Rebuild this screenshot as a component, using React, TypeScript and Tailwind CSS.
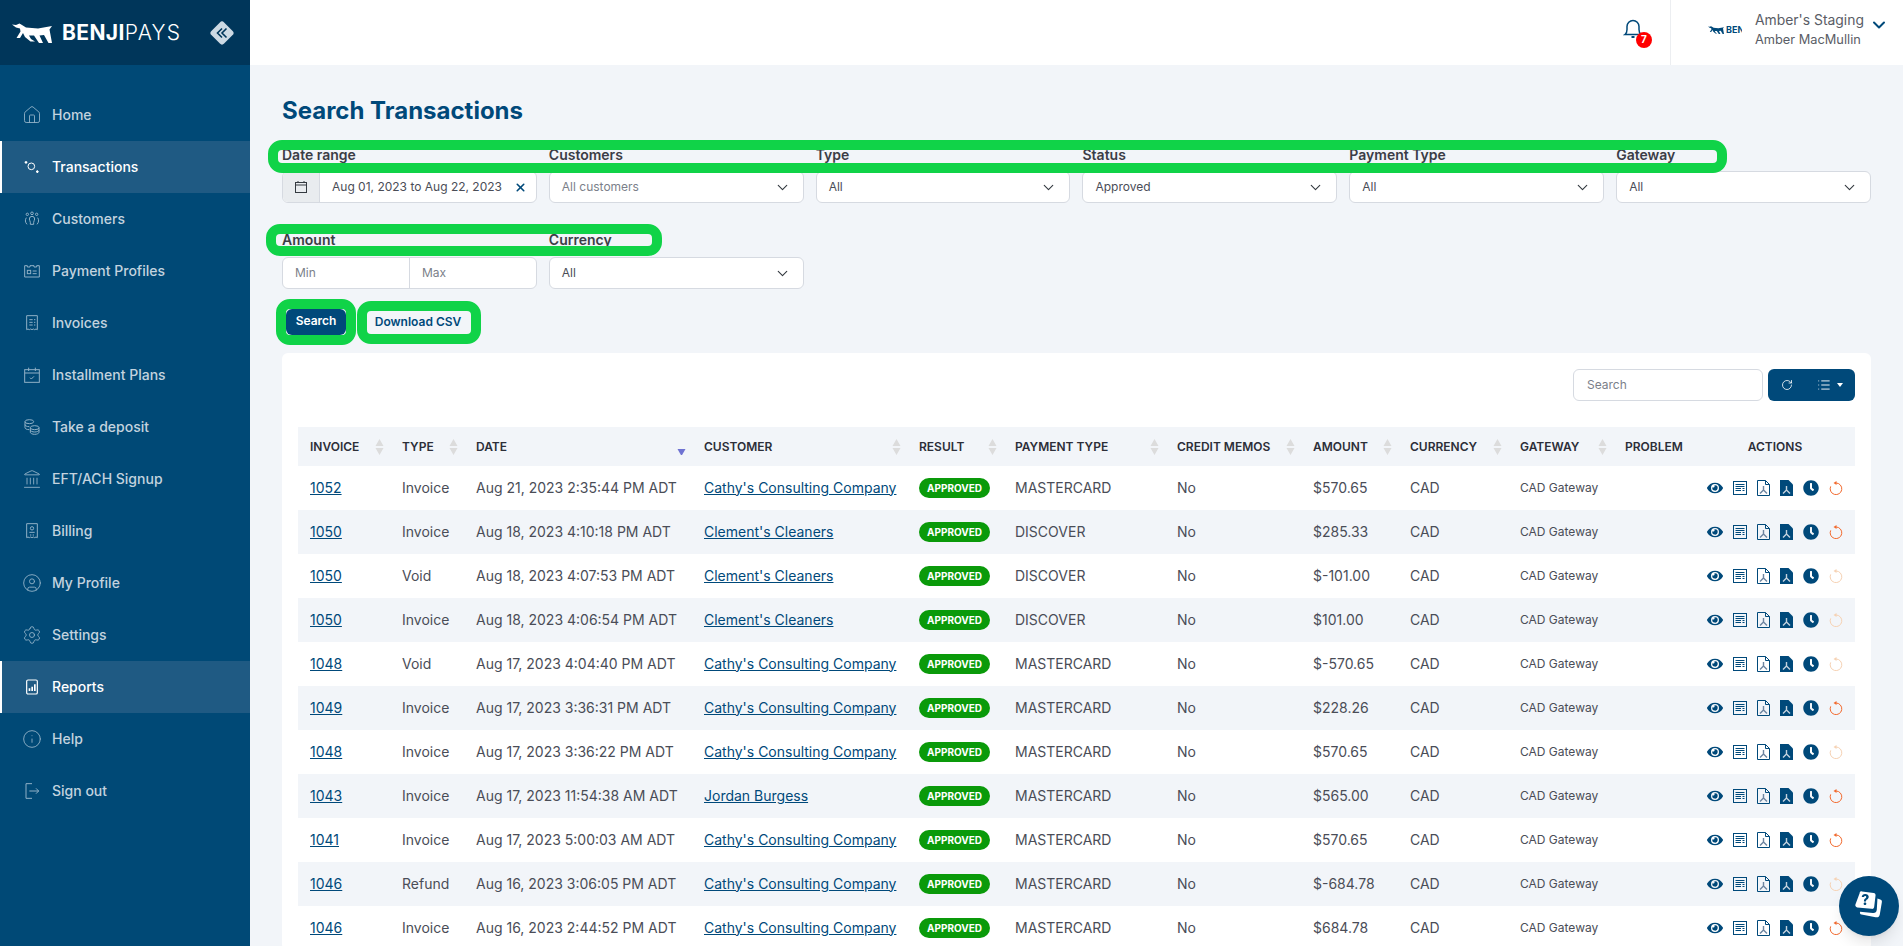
import { ChevronDown, RotateCw, List, House, Landmark, CircleUser, Settings, Info, X } from "lucide-react";
import { FaEye, FaClock } from "react-icons/fa";
import type { ReactNode } from "react";

const iconProps = {
  width: 16,
  height: 16,
  viewBox: "0 0 24 24",
  fill: "none",
  stroke: "currentColor",
  strokeWidth: 1.5,
};

const TransactionsIcon = () => (
  <svg {...iconProps}>
    <circle cx="11" cy="11" r="5" />
    <path d="M3 3v4M1 5h4M20 17v4M18 19h4" strokeWidth={2} />
  </svg>
);

const CustomersIcon = () => (
  <svg {...iconProps}>
    <circle cx="12" cy="3.500" r="2" />
    <circle cx="5" cy="5" r="1.800" />
    <circle cx="19" cy="5" r="1.800" />
    <path d="M8 12a4 4 0 0 1 8 0c0 2-1.500 3-1.500 5v3h-5v-3c0-2-1.500-3-1.500-5z" />
    <path d="M3.500 10c-2 3-2 7 1 10M20.500 10c2 3 2 7-1 10" />
  </svg>
);

const ProfilesIcon = () => (
  <svg {...iconProps}>
    <path d="M1 4h4v2h4V4h6v2h4V4h4v17H1z" />
    <rect x="5" y="11" width="5" height="5" />
    <path d="M13 12h6M13 16h6" />
  </svg>
);

const InvoicesIcon = () => (
  <svg {...iconProps}>
    <path d="M4 1h16v21l-2-1-2 1-2-1-2 1-2-1-2 1-2-1-2 1z" />
    <path d="M8 7h5M15 7h2M8 11h5M15 11h2M8 15h5M15 15h2" />
  </svg>
);

const PlansIcon = () => (
  <svg {...iconProps}>
    <rect x="1" y="4" width="22" height="19" />
    <path d="M1 9h22M7 1v5M17 1v5M9 16l2 2 4-4" />
  </svg>
);

const DepositIcon = () => (
  <svg {...iconProps}>
    <ellipse cx="8" cy="4" rx="6.500" ry="3" />
    <path d="M1.500 4v9c0 1.500 2.500 3 6.500 3M1.500 8.500c0 1.500 2.500 3 6.500 3" />
    <ellipse cx="16" cy="13" rx="6.500" ry="3" />
    <path d="M9.500 13v7c0 1.500 3 3 6.500 3s6.500-1.500 6.500-3v-7M9.500 16.500c0 1.500 3 3 6.500 3s6.500-1.500 6.500-3" />
  </svg>
);

const BillingIcon = () => (
  <svg {...iconProps}>
    <path d="M4 1h16v21l-2-1-2 1-2-1-2 1-2-1-2 1-2-1-2 1z" />
    <circle cx="12" cy="8" r="2.500" />
    <path d="M8 14h8M9 18h2M13 18h2" />
  </svg>
);

const ReportsIcon = () => (
  <svg {...iconProps} strokeWidth={1.8}>
    <rect x="4" y="1.500" width="16" height="21" rx="2" />
    <path d="M7 14h2.500v4H7zM11 11.500h2.500V18H11zM15 8h2.500v10H15z" fill="currentColor" stroke="none" />
  </svg>
);

const SignOutIcon = () => (
  <svg {...iconProps}>
    <path d="M12 1H3v22h9M8 12h14M18 8l4 4-4 4" />
  </svg>
);

const thinIcon = { size: 20, strokeWidth: 1.1, className: "shrink-0" };

const navItems: { label: string; icon: ReactNode; active?: boolean }[] = [
  { label: "Home", icon: <House {...thinIcon} /> },
  { label: "Transactions", icon: <TransactionsIcon />, active: true },
  { label: "Customers", icon: <CustomersIcon /> },
  { label: "Payment Profiles", icon: <ProfilesIcon /> },
  { label: "Invoices", icon: <InvoicesIcon /> },
  { label: "Installment Plans", icon: <PlansIcon /> },
  { label: "Take a deposit", icon: <DepositIcon /> },
  { label: "EFT/ACH Signup", icon: <Landmark {...thinIcon} /> },
  { label: "Billing", icon: <BillingIcon /> },
  { label: "My Profile", icon: <CircleUser {...thinIcon} /> },
  { label: "Settings", icon: <Settings {...thinIcon} /> },
  { label: "Reports", icon: <ReportsIcon />, active: true },
  { label: "Help", icon: <Info {...thinIcon} /> },
  { label: "Sign out", icon: <SignOutIcon /> },
];

const cathy = "Cathy's Consulting Company";
const clement = "Clement's Cleaners";

// invoice, type, date, customer, payment type, amount, can refund
const rows: [string, string, string, string, string, string, boolean][] = [
  ["1052", "Invoice", "Aug 21, 2023 2:35:44 PM ADT", cathy, "MASTERCARD", "$570.65", true],
  ["1050", "Invoice", "Aug 18, 2023 4:10:18 PM ADT", clement, "DISCOVER", "$285.33", true],
  ["1050", "Void", "Aug 18, 2023 4:07:53 PM ADT", clement, "DISCOVER", "$-101.00", false],
  ["1050", "Invoice", "Aug 18, 2023 4:06:54 PM ADT", clement, "DISCOVER", "$101.00", false],
  ["1048", "Void", "Aug 17, 2023 4:04:40 PM ADT", cathy, "MASTERCARD", "$-570.65", false],
  ["1049", "Invoice", "Aug 17, 2023 3:36:31 PM ADT", cathy, "MASTERCARD", "$228.26", true],
  ["1048", "Invoice", "Aug 17, 2023 3:36:22 PM ADT", cathy, "MASTERCARD", "$570.65", false],
  ["1043", "Invoice", "Aug 17, 2023 11:54:38 AM ADT", "Jordan Burgess", "MASTERCARD", "$565.00", true],
  ["1041", "Invoice", "Aug 17, 2023 5:00:03 AM ADT", cathy, "MASTERCARD", "$570.65", true],
  ["1046", "Refund", "Aug 16, 2023 3:06:05 PM ADT", cathy, "MASTERCARD", "$-684.78", false],
  ["1046", "Invoice", "Aug 16, 2023 2:44:52 PM ADT", cathy, "MASTERCARD", "$684.78", true],
];

const columns: { label: string; width: string; sort?: "both" | "down" }[] = [
  { label: "Invoice", width: "w-[92px]", sort: "both" },
  { label: "Type", width: "w-[74px]", sort: "both" },
  { label: "Date", width: "w-[228px]", sort: "down" },
  { label: "Customer", width: "w-[215px]", sort: "both" },
  { label: "Result", width: "w-[96px]", sort: "both" },
  { label: "Payment Type", width: "w-[162px]", sort: "both" },
  { label: "Credit Memos", width: "w-[136px]", sort: "both" },
  { label: "Amount", width: "w-[97px]", sort: "both" },
  { label: "Currency", width: "w-[110px]", sort: "both" },
  { label: "Gateway", width: "w-[105px]", sort: "both" },
  { label: "Problem", width: "w-[82px]" },
];

const DogLogo = ({ className }: { className: string }) => (
  <svg viewBox="0 0 40 20" className={className} fill="currentColor">
    <path d="M0 1.500 4 2 7.500 0.500 10 2 14 4.500 26 5.500 40 3 37.500 6.500 40 20H36.500L32 12 27.500 12.500 31 20H27L22 12.500 17 12.500 19 16 23 18.500H18.500L13 14 11 10 8 15H4.500L8.500 8.500 8 5.500 4 4.500Z" />
  </svg>
);

const Select = ({ value, muted }: { value: string; muted?: boolean }) => (
  <div className="flex h-8 items-center justify-between rounded-md border border-[#d6dae1] bg-white pr-[12px] pl-3 text-xs">
    <span className={muted ? "text-[#7b7f8a]" : "text-[#4a4d57]"}>{value}</span>
    <ChevronDown size={17} strokeWidth={1.6} className="text-[#343a40]" />
  </div>
);

const Label = ({ children, low }: { children: string; low?: boolean }) => (
  <div className={low ? "mb-[9px] h-4 text-sm leading-4 font-semibold text-[#3b3d46]" : "mb-2 h-4 text-sm leading-4 font-semibold text-[#3b3d46]"}>
    {children}
  </div>
);

const DocIcon = () => (
  <svg viewBox="0 0 14 14" className="h-[14px] w-[14px]" fill="none" stroke="currentColor">
    <rect x="0.500" y="0.500" width="13" height="13" strokeWidth="1" />
    <path d="M2.500 3.500h9M2.500 5.500h9M2.500 7.500h5.500M9.500 7.500h2M2.500 9.500h5.500M9.500 9.500h2" strokeWidth="1" />
  </svg>
);

const PdfOutlineIcon = () => (
  <svg viewBox="0 0 13 16" className="h-4 w-[13px]" fill="none">
    <path d="M0.500 0.500H8.500L12.500 4.500V15.500H0.500Z M8.500 0.500V4.500H12.500" stroke="#00497a" />
    <path d="M6.500 6V10M6.500 10 3 13.500M6.500 10 10 13.500" stroke="#6d84a0" strokeWidth="1.400" />
  </svg>
);

const PdfSolidIcon = () => (
  <svg viewBox="0 0 13 16" className="h-4 w-[13px]">
    <path d="M0 0H8.500L13 4.500V16H0Z" fill="#00497a" />
    <path d="M6.500 6V10M6.500 10 3 13.500M6.500 10 10 13.500" stroke="#c4d2de" strokeWidth="1.400" fill="none" />
  </svg>
);

const RefundIcon = ({ on }: { on: boolean }) => (
  <svg viewBox="0 0 14 14" className={on ? "h-[14px] w-[14px] text-[#f26a2e]" : "h-[14px] w-[14px] text-[#f6d2b4]"} fill="none" stroke="currentColor">
    <path d="M7 2a5.800 5.800 0 1 1-5.300 3.400" strokeWidth="1" />
    <path d="M7.500 0v4L4.500 2z" fill="currentColor" stroke="none" />
  </svg>
);

const SortArrows = ({ kind }: { kind: "both" | "down" }) =>
  kind === "down" ? (
    <svg width="9" height="16" viewBox="0 0 9 16" className="text-[#6f73d2]">
      <path d="M0.500 10h8l-4 7z" fill="currentColor" />
    </svg>
  ) : (
    <svg width="9" height="16" viewBox="0 0 9 16" className="text-[#dcdcdc]">
      <path d="M4.500 0l4 7h-8zM0.500 9h8l-4 7z" fill="currentColor" />
    </svg>
  );

const App = () => {
  return (
    <div className="flex h-screen overflow-hidden bg-[#f2f5f9] font-['Inter',sans-serif]">
      <aside className="w-[250px] shrink-0 bg-[#004976]">
        <div className="flex h-[65px] items-center bg-[#00365a] pr-4 pl-3 text-white">
          <DogLogo className="h-5 w-10" />
          <span className="ml-[10px] text-[21px] leading-none font-bold tracking-[0.4px]">BENJI</span>
          <span className="text-[21px] leading-none font-light tracking-[1.2px]">PAYS</span>
          <span className="mr-[3px] ml-auto flex h-[18px] w-[18px] rotate-45 items-center justify-center rounded-[3px] bg-[#ccd9e3]">
            <svg viewBox="0 0 14 14" className="h-[14px] w-[14px] -rotate-45 text-[#00365a]" fill="none" stroke="currentColor" strokeWidth="1.600">
              <path d="M7 2.500 2.500 7 7 11.500M11.500 2.500 7 7l4.500 4.500" />
            </svg>
          </span>
        </div>
        <nav className="pt-6">
          {navItems.map((item) => (
            <div
              key={item.label}
              className={
                item.active
                  ? "flex h-[52px] items-center gap-3 border-l-2 border-white bg-[#1f5a83] pl-[22px] text-sm font-medium text-white"
                  : "flex h-[52px] items-center gap-3 pl-6 text-sm font-medium text-[#c3d3df]"
              }
            >
              <span className={item.active ? "flex h-4 w-4 items-center justify-center text-white" : "flex h-4 w-4 items-center justify-center text-[#8fb0c6]"}>
                {item.icon}
              </span>
              {item.label}
            </div>
          ))}
        </nav>
      </aside>

      <div className="flex min-w-0 flex-1 flex-col">
        <header className="flex h-[65px] shrink-0 items-center justify-end bg-white">
          <div className="relative mr-[27px] -translate-y-[4px] text-[#00497a]">
            <svg viewBox="0 0 20 20" className="h-5 w-5" fill="none" stroke="currentColor" strokeWidth="1.500">
              <path d="M2 15.500c1.500-1 2-2.500 2-5V7.500a6 6 0 0 1 12 0v3c0 2.500.5 4 2 5z" />
              <path d="M8.500 18h3" strokeWidth="2" />
            </svg>
            <span className="absolute top-[13px] left-[13px] flex h-4 w-4 items-center justify-center rounded-full bg-[#f00] text-[10px] font-bold text-white">
              7
            </span>
          </div>
          <div className="flex h-full w-[233px] items-center border-l border-[#eceef1] pl-[37px]">
            <div className="flex w-[34px] -translate-y-[3px] items-center overflow-hidden text-[#00497a]">
              <DogLogo className="h-[8px] w-[16px] shrink-0" />
              <span className="ml-[2px] text-[9px] font-bold">BENJI</span>
            </div>
            <div className="ml-[13px] -translate-y-[3px] text-[13.9px] leading-[19px] text-[#5a5d66]">
              <div>Amber's Staging</div>
              <div className="text-[12.8px]">Amber MacMullin</div>
            </div>
            <ChevronDown size={20} strokeWidth={2.4} className="ml-[5px] -translate-y-[8px] text-[#00497a]" />
          </div>
        </header>

        <main className="relative flex-1 px-8">
          <h1 className="mt-[30px] h-8 text-2xl leading-8 font-bold text-[#00497a]">Search Transactions</h1>

          <div className="mt-5 grid grid-cols-6 gap-x-3 gap-y-[29px]">
            <div>
              <Label>Date range</Label>
              <div className="flex h-8 overflow-hidden rounded-md border border-[#d6dae1] bg-white">
                <span className="flex w-[37px] items-center justify-center border-r border-[#d6dae1] bg-[#e9ecef] text-[#343a40]">
                  <svg viewBox="0 0 14 14" className="h-[14px] w-[14px]" fill="none" stroke="currentColor">
                    <rect x="1.500" y="2.500" width="11" height="10" />
                    <path d="M1.500 5h11M4 1v2M10 1v2" />
                  </svg>
                </span>
                <span className="flex flex-1 items-center justify-between pr-[9px] pl-3 text-xs text-[#4a4d57]">
                  Aug 01, 2023 to Aug 22, 2023
                  <X size={13} strokeWidth={3} className="text-[#00497a]" />
                </span>
              </div>
            </div>
            <div>
              <Label>Customers</Label>
              <Select value="All customers" muted />
            </div>
            <div>
              <Label>Type</Label>
              <Select value="All" />
            </div>
            <div>
              <Label>Status</Label>
              <Select value="Approved" />
            </div>
            <div>
              <Label>Payment Type</Label>
              <Select value="All" />
            </div>
            <div>
              <Label>Gateway</Label>
              <Select value="All" />
            </div>
            <div>
              <Label low>Amount</Label>
              <div className="flex h-8 rounded-md border border-[#d6dae1] bg-white text-xs text-[#7b7f8a]">
                <span className="flex flex-1 items-center border-r border-[#d6dae1] pl-3">Min</span>
                <span className="flex flex-1 items-center pl-3">Max</span>
              </div>
            </div>
            <div>
              <Label low>Currency</Label>
              <Select value="All" />
            </div>
          </div>

          <div className="mt-5 ml-1 flex items-center gap-[21px]">
            <button className="relative h-[26px] w-[60px] rounded-md bg-[#00497a] pb-[2px] text-xs font-semibold text-white">
              Search
              <span className="absolute -inset-[10px] rounded-[14px] border-[10px] border-[#10d348]" />
            </button>
            <button className="relative h-[23px] w-[104px] rounded-md bg-[#f2f5f9] pr-[2px] pb-[1px] text-xs font-semibold text-[#00497a]">
              Download CSV
              <span className="absolute -inset-[10px] rounded-[14px] border-[10px] border-[#10d348]" />
            </button>
          </div>

          <section className="mt-[18px] rounded-md bg-white px-4 pt-4">
            <div className="flex justify-end">
              <div className="flex h-8 w-[190px] items-center rounded-md border border-[#d6dae1] pl-[13px] text-xs text-[#7b7f8a]">Search</div>
              <div className="ml-[5px] flex h-8 w-[87px] items-center rounded-md bg-[#00497a] text-white">
                <RotateCw size={12} strokeWidth={1.6} className="ml-[13px]" />
                <List size={14} strokeWidth={1.6} className="ml-6" />
                <svg width="6" height="4" viewBox="0 0 6 4" className="ml-[6px]">
                  <path d="M0 0h6L3 4z" fill="currentColor" />
                </svg>
              </div>
            </div>

            <table className="mt-[26px] w-full table-fixed border-collapse">
              <thead>
                <tr className="h-[39px] bg-[#f2f5f9] text-left text-xs font-semibold text-[#2c2e38] uppercase">
                  {columns.map((col) => (
                    <th key={col.label} className={`${col.width} pr-[6px] pl-3 font-semibold`}>
                      <div className="flex items-center justify-between whitespace-nowrap">
                        {col.label}
                        {col.sort && <SortArrows kind={col.sort} />}
                      </div>
                    </th>
                  ))}
                  <th className="text-center font-semibold">Actions</th>
                </tr>
              </thead>
              <tbody className="text-[14px] text-[#4a4d57]">
                {rows.map((row, i) => (
                  <tr key={row[2]} className={i % 2 === 1 ? "h-11 bg-[#f2f5f9]" : "h-11"}>
                    <td className="pb-[2px] pl-3">
                      <span className="text-[#00497a] underline">{row[0]}</span>
                    </td>
                    <td className="pb-[2px] pl-3">{row[1]}</td>
                    <td className="pb-[2px] pl-3 whitespace-nowrap">{row[2]}</td>
                    <td className="pb-[2px] pl-3 whitespace-nowrap">
                      <span className="text-[#00497a] underline">{row[3]}</span>
                    </td>
                    <td className="pl-3">
                      <span className="flex h-5 w-[71px] items-center justify-center rounded-full bg-[#0a9a0a] text-[10px] font-bold text-white">
                        APPROVED
                      </span>
                    </td>
                    <td className="pb-[2px] pl-3">{row[4]}</td>
                    <td className="pb-[2px] pl-3">No</td>
                    <td className="pb-[2px] pl-3">{row[5]}</td>
                    <td className="pb-[2px] pl-3">CAD</td>
                    <td className="pl-3 text-xs whitespace-nowrap">CAD Gateway</td>
                    <td />
                    <td>
                      <div className="flex items-center justify-center gap-[10px] text-[#00497a]">
                        <FaEye size={16} />
                        <DocIcon />
                        <PdfOutlineIcon />
                        <PdfSolidIcon />
                        <FaClock size={16} />
                        <RefundIcon on={row[6]} />
                      </div>
                    </td>
                  </tr>
                ))}
              </tbody>
            </table>
          </section>

          <div className="pointer-events-none absolute top-[75px] left-[18px] h-[33px] w-[1459px] rounded-[14px] border-[10px] border-[#10d348]" />
          <div className="pointer-events-none absolute top-[159px] left-[16px] h-[32px] w-[396px] rounded-[14px] border-[10px] border-[#10d348]" />
        </main>
      </div>

      <button className="fixed right-1 bottom-[10px] flex h-[60px] w-[60px] items-center justify-center rounded-full bg-[#00497a] text-white shadow-lg">
        <svg viewBox="0 0 32 32" className="h-[30px] w-[30px]">
          <path d="M6 2.500 C6 1 7 0 8.500 0.500 L21 2 C22.500 2.300 23 3 23 4.500 L21.500 17 C21.300 18.500 20 19.500 18.500 19 L3.500 17.500 C2 17.300 1 16 1.500 14.500 Z" fill="currentColor" />
          <path d="M25 8 L28 9 C29.500 9.500 30 10.500 29.700 12 L27.500 25 C27 27.500 25.500 28.500 23 28 L8 25 C6.500 24.700 6 23.500 6.500 22 L20 23.500 C22.500 23.800 24 22.500 24.300 20 Z" fill="currentColor" />
          <text x="12" y="15" textAnchor="middle" fontFamily="Inter, sans-serif" fontSize="15" fontWeight="800" fill="#00497a">?</text>
        </svg>
      </button>
    </div>
  );
};

export default App;
